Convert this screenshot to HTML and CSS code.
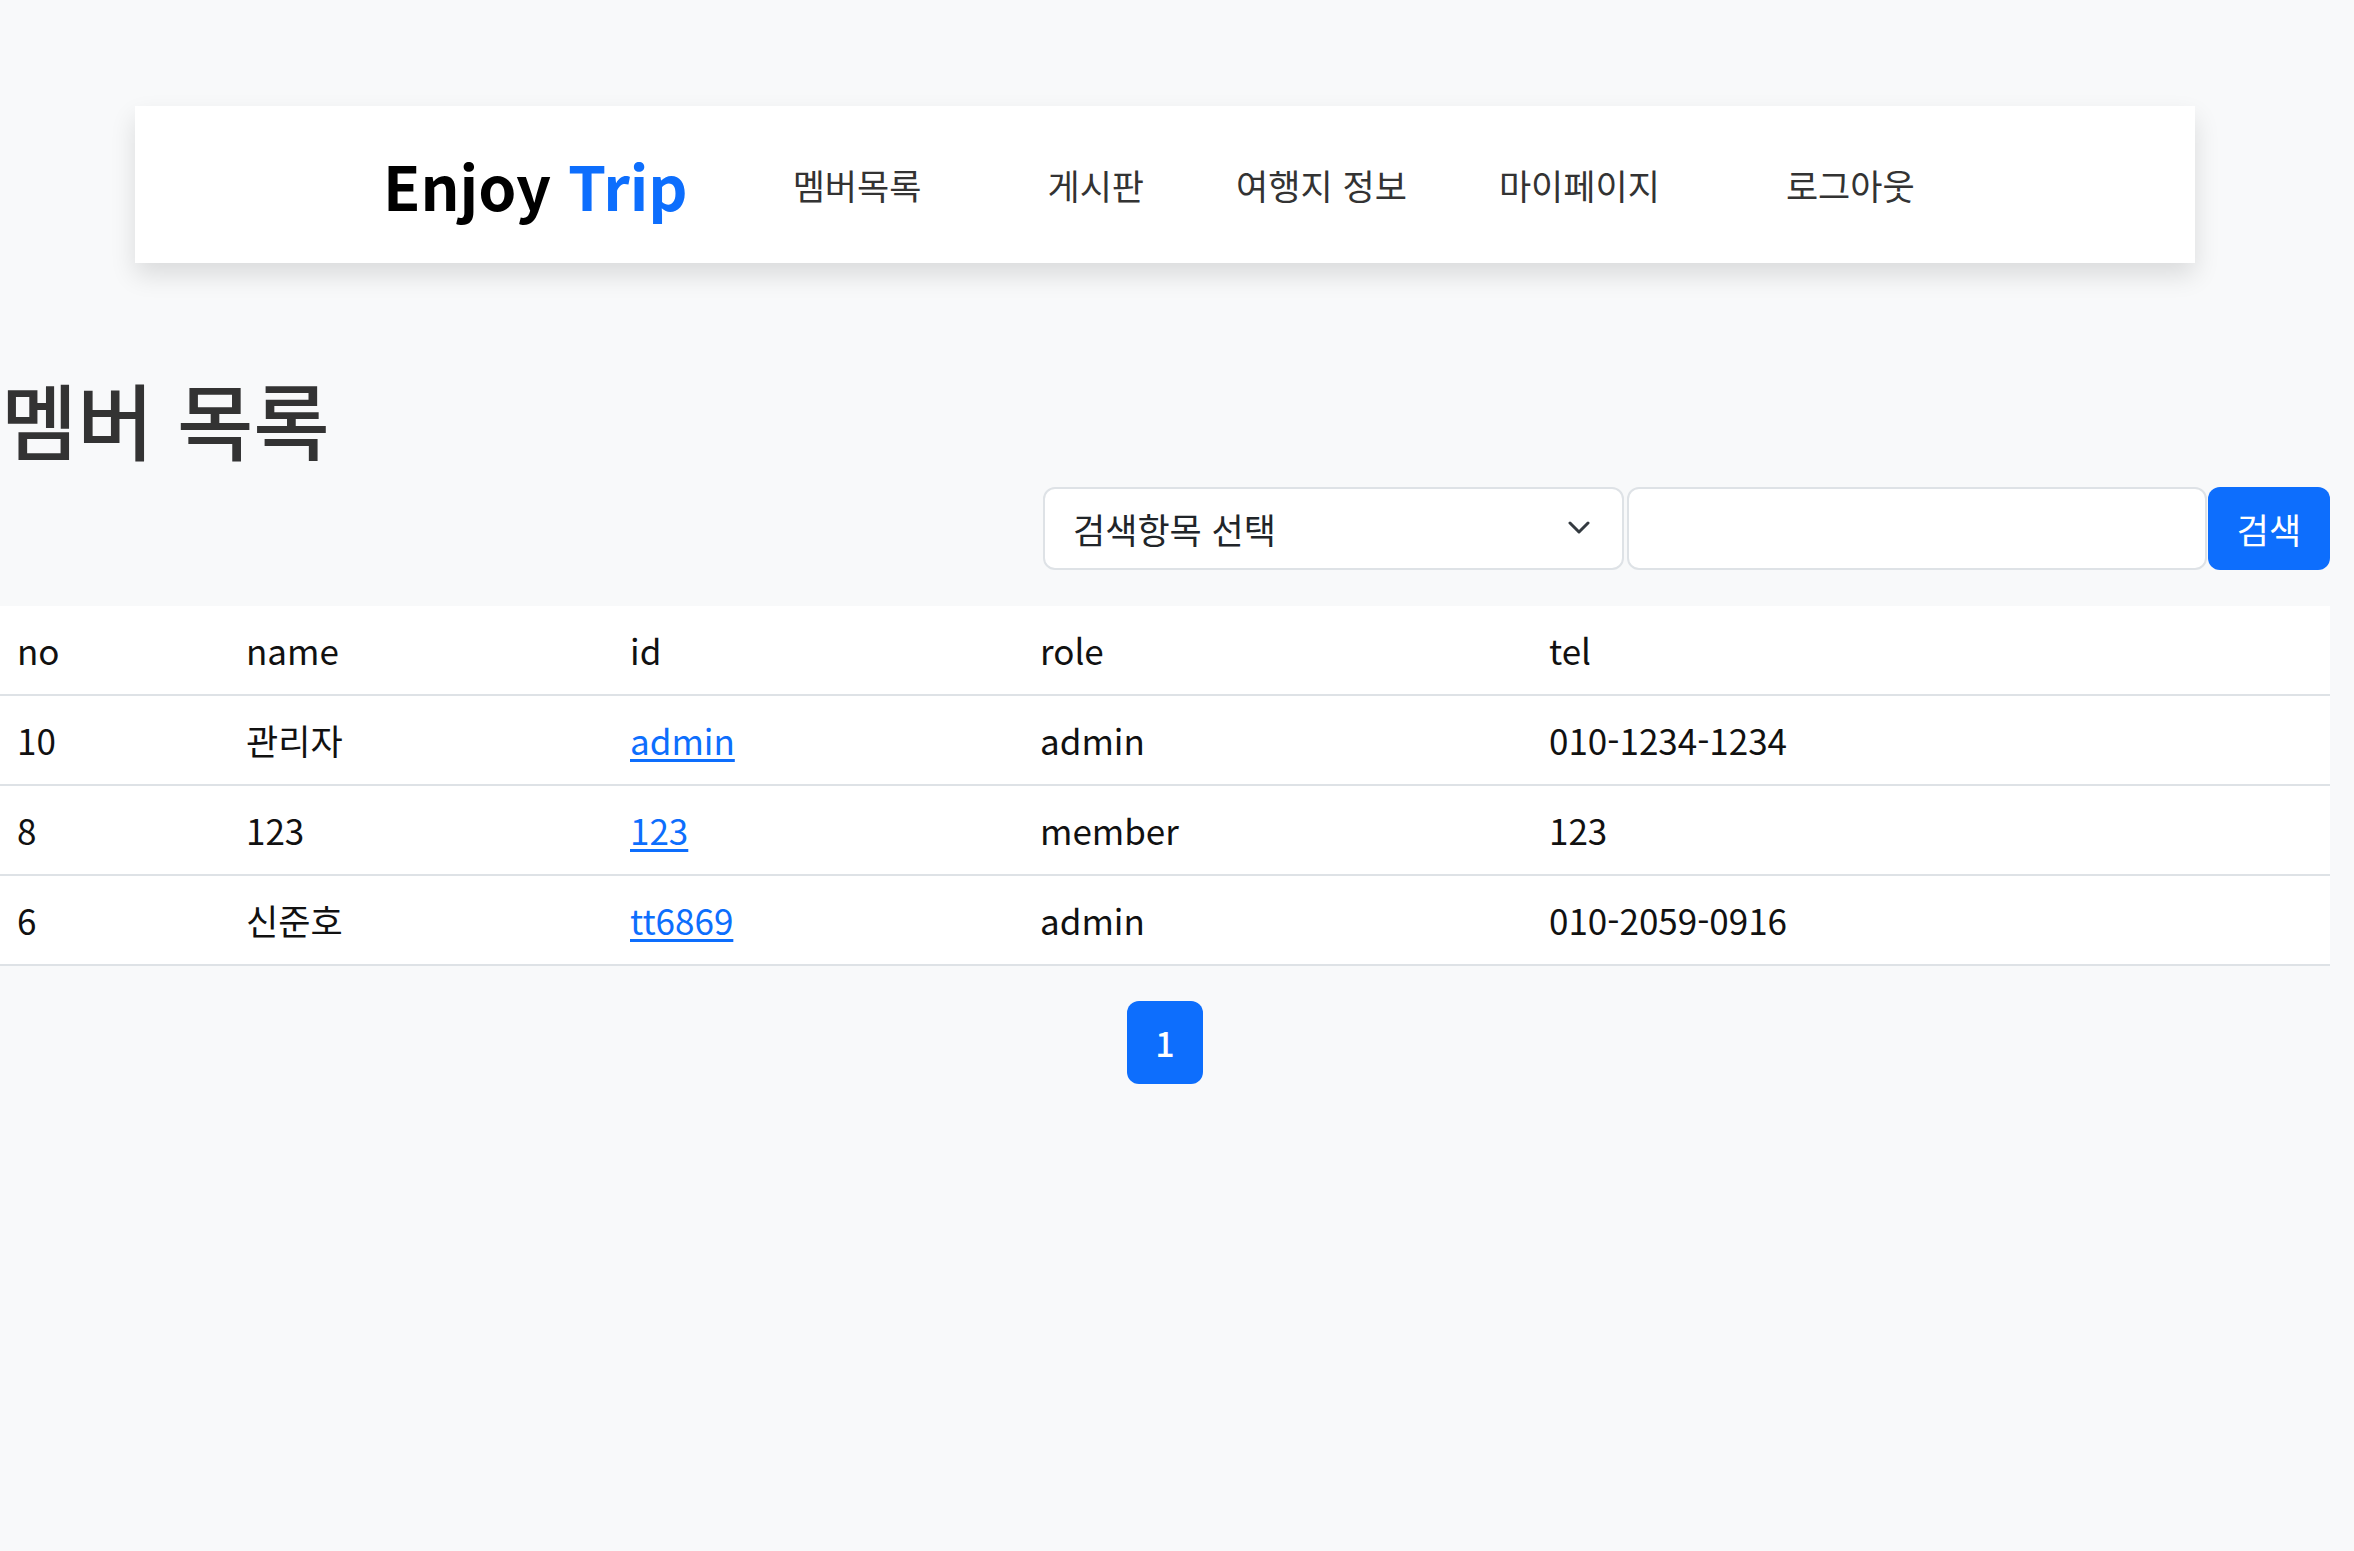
FILE: index.html
```html
<!DOCTYPE html>
<html lang="ko">
<head>
<meta charset="utf-8">
<title>Enjoy Trip - 멤버 목록</title>
<link rel="stylesheet" href="styles.css">
</head>
<body>
<div class="page">
  <header class="navbar">
    <a class="logo" href="#">Enjoy <span class="logo-accent">Trip</span></a>
    <nav class="menu">
      <a class="menu-item m1" href="#">멤버목록</a>
      <a class="menu-item m2" href="#">게시판</a>
      <a class="menu-item m3" href="#">여행지 정보</a>
      <a class="menu-item m4" href="#">마이페이지</a>
      <a class="menu-item m5" href="#">로그아웃</a>
    </nav>
  </header>

  <h1 class="title">멤버 목록</h1>

  <form class="search">
    <div class="select">
      <span class="select-text">검색항목 선택</span>
      <svg class="chevron" width="22" height="14" viewBox="0 0 22 14"><path d="M2 2 L11 11 L20 2" fill="none" stroke="#343a40" stroke-width="3" stroke-linecap="round" stroke-linejoin="round"/></svg>
    </div>
    <input class="search-input" type="text">
    <button class="search-btn" type="button">검색</button>
  </form>

  <table class="members">
    <thead>
      <tr><th class="c1">no</th><th class="c2">name</th><th class="c3">id</th><th class="c4">role</th><th class="c5">tel</th></tr>
    </thead>
    <tbody>
      <tr><td>10</td><td>관리자</td><td><a href="#">admin</a></td><td>admin</td><td>010-1234-1234</td></tr>
      <tr><td>8</td><td>123</td><td><a href="#">123</a></td><td>member</td><td>123</td></tr>
      <tr><td>6</td><td>신준호</td><td><a href="#">tt6869</a></td><td>admin</td><td>010-2059-0916</td></tr>
    </tbody>
  </table>

  <div class="pagination">
    <a class="page-btn" href="#">1</a>
  </div>
</div>
</body>
</html>
```

FILE: styles.css
```css
html, body {
  margin: 0;
  padding: 0;
  background: #f8f9fa;
}
body {
  font-family: "Noto Sans CJK KR", "Noto Sans", sans-serif;
  color: #212529;
}
.page {
  width: 2330px;
  padding-top: 106px;
}
.navbar {
  width: 2060px;
  height: 157px;
  margin: 0 auto;
  box-sizing: border-box;
  background: #fff;
  box-shadow: 0 12px 24px rgba(0, 0, 0, 0.12);
  display: flex;
  align-items: center;
  padding-left: 248px;
}
.logo {
  font-size: 61px;
  font-weight: 700;
  color: #000;
  text-decoration: none;
  line-height: 1;
}
.logo-accent { color: #0d6efd; }
.menu {
  display: flex;
  align-items: center;
}
.menu-item {
  font-size: 35px;
  color: #333;
  text-decoration: none;
  line-height: 1;
}
.m1 { margin-left: 105px; }
.m2 { margin-left: 126px; }
.m3 { margin-left: 92px; }
.m4 { margin-left: 92px; }
.m5 { margin-left: 126px; }

.title {
  margin: 106px 0 0 1px;
  font-size: 83px;
  font-weight: 500;
  line-height: 1.2;
  color: #333;
}
.search {
  display: flex;
  justify-content: flex-end;
  margin-top: 18px;
  height: 83px;
}
.select {
  width: 581px;
  box-sizing: border-box;
  border: 2px solid #dee2e6;
  border-radius: 12px;
  background: #fff;
  display: flex;
  align-items: center;
  justify-content: space-between;
  padding: 0 32px 0 28px;
  font-size: 35px;
  color: #212529;
}
.search-input {
  width: 580px;
  margin-left: 3px;
  box-sizing: border-box;
  border: 2px solid #dee2e6;
  border-radius: 12px;
  background: #fff;
  font-size: 35px;
}
.search-btn {
  width: 122px;
  margin-left: 1px;
  border: none;
  border-radius: 12px;
  background: #0d6efd;
  color: #fff;
  font-family: "Noto Sans CJK KR", sans-serif;
  font-size: 35px;
  padding: 0;
}
.members {
  width: 2330px;
  margin-top: 36px;
  border-collapse: collapse;
  background: #fff;
  font-size: 35px;
}
.members th, .members td {
  text-align: left;
  font-weight: 400;
  padding: 0 0 0 17px;
  height: 88px;
  border-bottom: 2px solid #dee2e6;
  color: #111;
}
.members .c1 { width: 212px; }
.members .c2 { width: 367px; }
.members .c3 { width: 393px; }
.members .c4 { width: 492px; }
.members a { color: #0d6efd; text-decoration: underline; text-underline-offset: 4px; }
.pagination {
  display: flex;
  justify-content: center;
  margin-top: 35px;
}
.page-btn {
  width: 76px;
  height: 83px;
  border-radius: 12px;
  background: #0d6efd;
  color: #fff;
  font-size: 34px;
  font-weight: 500;
  text-decoration: none;
  display: flex;
  align-items: center;
  justify-content: center;
}
```
